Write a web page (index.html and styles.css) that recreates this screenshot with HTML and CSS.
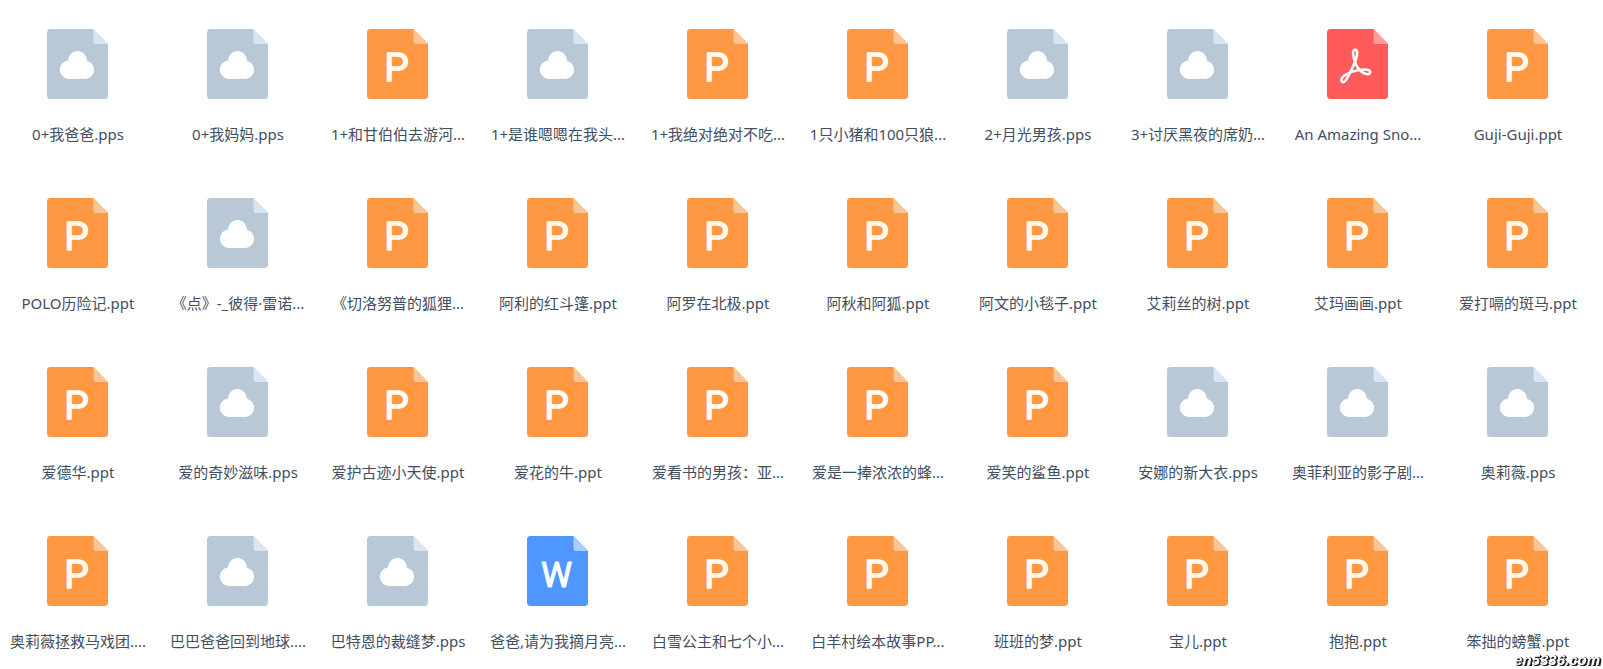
FILE: index.html
```
<!DOCTYPE html>
<html lang="zh-CN">
<head>
<meta charset="utf-8">
<title>绘本</title>
<link rel="stylesheet" href="styles.css">
</head>
<body>
<main>
  <ul class="files" id="files"></ul>
</main>
<div class="watermark">en5336.com</div>
<script src="files.js"></script>
</body>
</html>
```
FILE: styles.css
```
* { box-sizing: border-box; }

body {
  margin: 0;
  background: #fff;
  color: #424e5e;
  font-family: "Noto Sans", "Noto Sans CJK SC", sans-serif;
  font-size: 15px;
}

.files {
  display: grid;
  grid-template-columns: repeat(10, minmax(0, 1fr));
  column-gap: 20px;
  row-gap: 52px;
  margin: 0;
  padding: 29px 15px 0 8px;
  list-style: none;
}

.file {
  display: flex;
  flex-direction: column;
  align-items: center;
  gap: 23px;
}

.icon { display: block; width: 62px; height: 70px; }

.name {
  height: 24px;
  line-height: 24px;
  white-space: nowrap;
}

.sheet { fill: currentColor; }
.pps { color: #b8c8d6; }
.ppt { color: #ff9743; }
.doc { color: #4f96ff; }
.pdf { color: #ff5a5a; }

.fold { fill: #d8e6f3; }
.ppt .fold { fill: #ffc596; }
.doc .fold { fill: #a8cfff; }
.pdf .fold { fill: #ff9c9c; }

.letter {
  font-family: Roboto, sans-serif;
  font-weight: 400;
  fill: #fffaf0;
  stroke: #fffaf0;
  stroke-width: 1.4px;
  stroke-linejoin: round;
  text-anchor: middle;
}

.letter-p { font-size: 39px; }
.letter-w { font-size: 35px; fill: #fff; stroke: #fff; stroke-width: 1px; }

.watermark {
  position: fixed;
  right: 3px;
  bottom: 0;
  color: #fff;
  font: italic bold 15px/19px "Liberation Sans", sans-serif;
  text-shadow: 1px 1px 0 #222, 2px 1px 0 #222, 1px 0 0 #222;
}
```
FILE: files.js
```
const files = [
  ["pps", "0+我爸爸.pps"], ["pps", "0+我妈妈.pps"], ["ppt", "1+和甘伯伯去游河..."], ["pps", "1+是谁嗯嗯在我头..."], ["ppt", "1+我绝对绝对不吃..."],
  ["ppt", "1只小猪和100只狼..."], ["pps", "2+月光男孩.pps"], ["pps", "3+讨厌黑夜的席奶..."], ["pdf", "An Amazing Sno..."], ["ppt", "Guji-Guji.ppt"],
  ["ppt", "POLO历险记.ppt"], ["pps", "《点》-_彼得·雷诺..."], ["ppt", "《切洛努普的狐狸..."], ["ppt", "阿利的红斗篷.ppt"], ["ppt", "阿罗在北极.ppt"],
  ["ppt", "阿秋和阿狐.ppt"], ["ppt", "阿文的小毯子.ppt"], ["ppt", "艾莉丝的树.ppt"], ["ppt", "艾玛画画.ppt"], ["ppt", "爱打嗝的斑马.ppt"],
  ["ppt", "爱德华.ppt"], ["pps", "爱的奇妙滋味.pps"], ["ppt", "爱护古迹小天使.ppt"], ["ppt", "爱花的牛.ppt"], ["ppt", "爱看书的男孩：亚..."],
  ["ppt", "爱是一捧浓浓的蜂..."], ["ppt", "爱笑的鲨鱼.ppt"], ["pps", "安娜的新大衣.pps"], ["pps", "奥菲利亚的影子剧..."], ["pps", "奥莉薇.pps"],
  ["ppt", "奥莉薇拯救马戏团...."], ["pps", "巴巴爸爸回到地球...."], ["pps", "巴特恩的裁缝梦.pps"], ["doc", "爸爸,请为我摘月亮..."], ["ppt", "白雪公主和七个小..."],
  ["ppt", "白羊村绘本故事PP..."], ["ppt", "班班的梦.ppt"], ["ppt", "宝儿.ppt"], ["ppt", "抱抱.ppt"], ["ppt", "笨拙的螃蟹.ppt"]
];

const sheet = `<path class="sheet" d="M4 0H47L61.5 15V66.500a3.500 3.500 0 0 1-3.500 3.500H4a3.500 3.500 0 0 1-3.500-3.500V3.500A3.500 3.500 0 0 1 4 0z"/>
  <path class="fold" d="M47 0L61.500 15H49.500a2.500 2.500 0 0 1-2.500-2.500z"/>`;

const marks = {
  pps: `<path d="M21.800 50a9.300 9.300 0 0 1-.3-18.500C22 26 26 22 31 22s9 4 9.500 9.700A9.300 9.300 0 0 1 37.500 50z" fill="#fff"/>`,
  ppt: `<text class="letter letter-p" x="30" y="52">P</text>`,
  doc: `<text class="letter letter-w" x="30" y="51">W</text>`,
  pdf: `<path d="M26.500 24.500c-.5-4.800 4.800-4.800 4.200 0-.5 4.500-2.200 9-4.700 14-2.600 5.500-4.800 10.500-7.200 13.300-2.500 2.700-5.200.3-3.200-2.900 2.600-4 9-6.300 16-7.700 4-.8 8.700-1 10.700 0 2.700 1.700 1 4.800-2.200 3.900-3.500-.8-7.500-4.400-9.800-7.900-2-3.500-3.500-8.500-3.800-12.700z" fill="none" stroke="#fff" stroke-width="2.600" stroke-linejoin="round"/>`
};

document.getElementById("files").innerHTML = files.map(([type, name]) =>
  `<li class="file"><svg class="icon ${type}" viewBox="0.5 0 62 70" aria-hidden="true">${sheet}${marks[type]}</svg><span class="name">${name}</span></li>`
).join("");
```
